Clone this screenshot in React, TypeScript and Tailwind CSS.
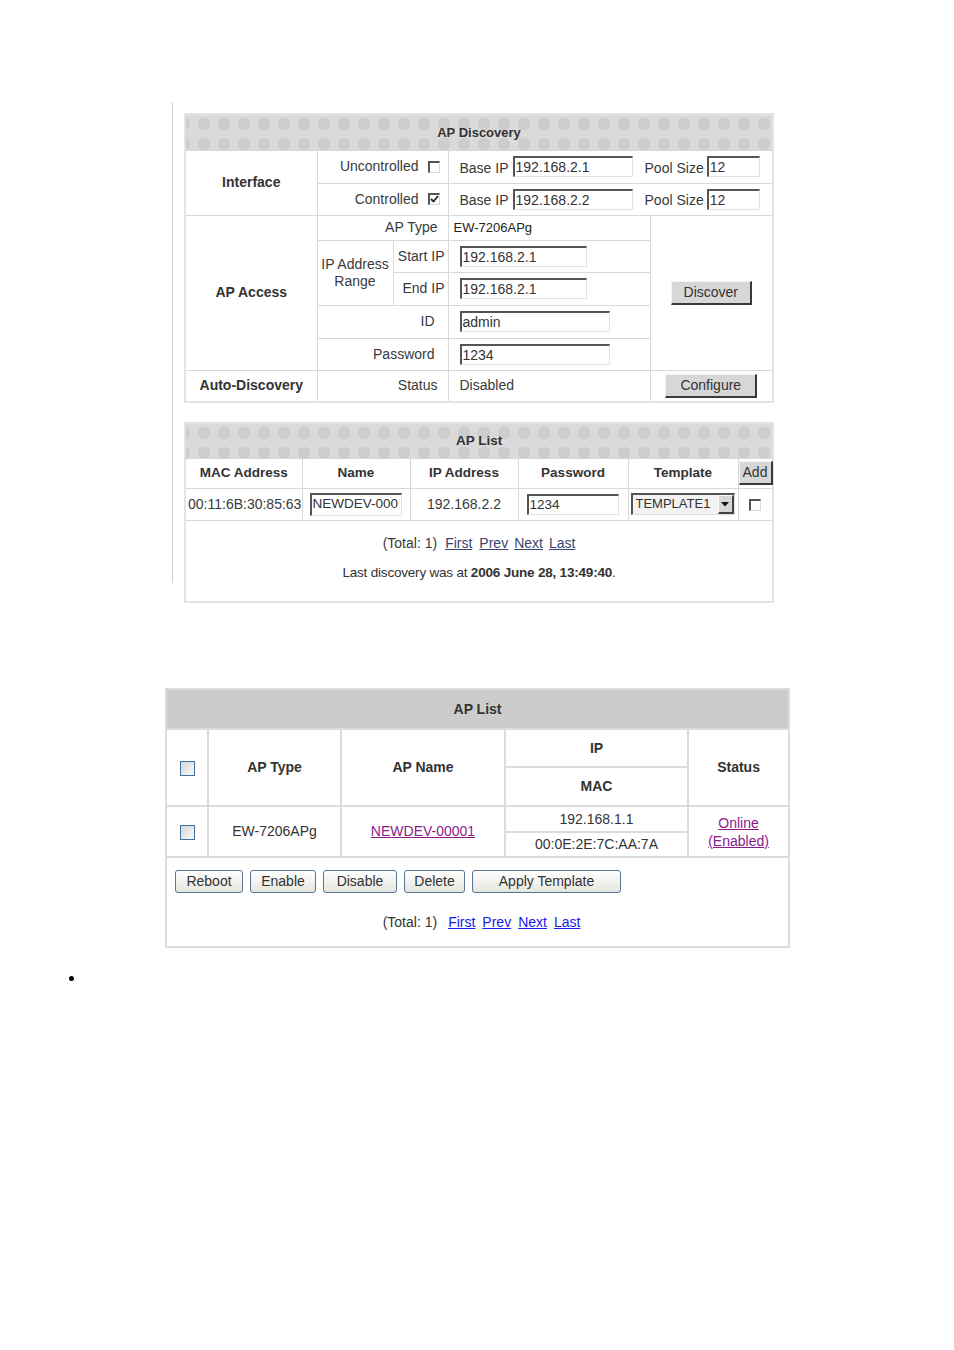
import React from "react";

const hdr =
  "bg-[#dadada] bg-[radial-gradient(circle,#cdcdcd_6px,transparent_6.5px)] bg-[length:20px_20px] bg-[position:8px_-1px]";
const tc = "p-0 border border-[#d9d9d9]";

function TInput({ w, value, fs }: { w: string; value: string; fs?: string }) {
  return (
    <div
      className={`h-[21px] ${w} ${fs ?? "text-[14px]"} border-t-2 border-l-2 border-r border-b border-t-[#555] border-l-[#555] border-r-[#e2e2e2] border-b-[#e2e2e2] bg-white pl-[1px] leading-[18px] text-[#333] overflow-hidden whitespace-nowrap`}
    >
      {value}
    </div>
  );
}

function TButton({ w, label }: { w: string; label: string }) {
  return (
    <div
      className={`inline-flex items-center justify-center h-[24px] ${w} bg-[#d7d7d7] border-t border-l border-t-[#f4f4f4] border-l-[#f4f4f4] border-r-2 border-b-2 border-r-[#3a3a3a] border-b-[#3a3a3a] text-[14px] text-[#333]`}
    >
      {label}
    </div>
  );
}

function TCheck({ checked }: { checked?: boolean }) {
  return (
    <span className="inline-flex w-[12px] h-[12px] border-t-2 border-l-2 border-r border-b border-t-[#555] border-l-[#555] border-r-[#d8d8d8] border-b-[#d8d8d8] bg-white align-middle items-center justify-center">
      {checked && (
        <svg width="9" height="9" viewBox="0 0 9 9">
          <path d="M1 4 L3.5 6.5 L8 1" stroke="#222" strokeWidth="1.8" fill="none" />
        </svg>
      )}
    </span>
  );
}

function BButton({ w, label }: { w: string; label: string }) {
  return (
    <div
      className={`flex items-center justify-center h-[23px] ${w} rounded-[3px] border border-[#5a7494] bg-gradient-to-b from-white to-[#e6e5de] text-[14px] text-[#333]`}
    >
      {label}
    </div>
  );
}

function BCheck() {
  return (
    <span className="inline-block w-[15px] h-[15px] border border-[#43709f] bg-gradient-to-br from-[#d6d6d6] to-[#fafafa] align-middle" />
  );
}

function IfaceRow({ label, checked, ip }: { label: string; checked?: boolean; ip: string }) {
  return (
    <>
      <td colSpan={2} className={`${tc} text-right pr-[8px]`}>
        <span className="inline-flex items-center gap-[9px]">
          {label} <TCheck checked={checked} />
        </span>
      </td>
      <td colSpan={2} className={`${tc} pl-[11px]`}>
        <div className="flex items-center">
          <span className="mt-[3px]">Base IP</span>
          <span className="ml-[4px]">
            <TInput w="w-[120px]" value={ip} />
          </span>
          <span className="ml-[12px] mt-[3px]">Pool Size</span>
          <span className="ml-[3px]">
            <TInput w="w-[53px]" value="12" />
          </span>
        </div>
      </td>
    </>
  );
}

function APDiscovery() {
  return (
    <table className="table-fixed border-collapse w-[588px] border-2 border-[#e3e3e3] text-[14px] text-[#3a3a3a]">
      <colgroup>
        <col className="w-[132px]" />
        <col className="w-[76px]" />
        <col className="w-[55px]" />
        <col className="w-[202px]" />
        <col className="w-[123px]" />
      </colgroup>
      <tbody>
        <tr className="h-[36px]">
          <td colSpan={5} className={`${tc} ${hdr} text-center font-bold text-[13px] text-[#333]`}>
            AP Discovery
          </td>
        </tr>
        <tr className="h-[33px]">
          <td rowSpan={2} className={`${tc} text-center font-bold text-[#333]`}>
            Interface
          </td>
          <IfaceRow label="Uncontrolled" ip="192.168.2.1" />
        </tr>
        <tr className="h-[32px]">
          <IfaceRow label="Controlled" checked ip="192.168.2.2" />
        </tr>
        <tr className="h-[25px]">
          <td rowSpan={5} className={`${tc} text-center font-bold text-[#333]`}>
            AP Access
          </td>
          <td colSpan={2} className={`${tc} text-right pr-[10px]`}>
            AP Type
          </td>
          <td className={`${tc} pl-[5px] text-[13px] text-[#222]`}>EW-7206APg</td>
          <td rowSpan={5} className={`${tc} text-center`}>
            <TButton w="w-[81px]" label="Discover" />
          </td>
        </tr>
        <tr className="h-[32px]">
          <td rowSpan={2} className={`${tc} text-center leading-[17px]`}>
            IP Address
            <br />
            Range
          </td>
          <td className={`${tc} text-right pr-[3px]`}>Start IP</td>
          <td className={`${tc} pl-[11px]`}>
            <TInput w="w-[127px]" value="192.168.2.1" />
          </td>
        </tr>
        <tr className="h-[33px]">
          <td className={`${tc} text-right pr-[3px]`}>End IP</td>
          <td className={`${tc} pl-[11px]`}>
            <TInput w="w-[127px]" value="192.168.2.1" />
          </td>
        </tr>
        <tr className="h-[33px]">
          <td colSpan={2} className={`${tc} text-right pr-[13px]`}>
            ID
          </td>
          <td className={`${tc} pl-[11px]`}>
            <TInput w="w-[150px]" value="admin" />
          </td>
        </tr>
        <tr className="h-[32px]">
          <td colSpan={2} className={`${tc} text-right pr-[13px]`}>
            Password
          </td>
          <td className={`${tc} pl-[11px]`}>
            <TInput w="w-[150px]" value="1234" />
          </td>
        </tr>
        <tr className="h-[32px]">
          <td className={`${tc} text-center font-bold text-[#333]`}>Auto-Discovery</td>
          <td colSpan={2} className={`${tc} text-right pr-[10px]`}>
            Status
          </td>
          <td className={`${tc} pl-[11px]`}>Disabled</td>
          <td className={`${tc} text-center`}>
            <TButton w="w-[92px]" label="Configure" />
          </td>
        </tr>
      </tbody>
    </table>
  );
}

function TopAPList() {
  const h = `${tc} text-center font-bold text-[13.5px] text-[#333]`;
  return (
    <table className="table-fixed border-collapse w-[588px] border-2 border-[#e3e3e3] text-[14px] text-[#3a3a3a]">
      <colgroup>
        <col className="w-[117px]" />
        <col className="w-[108px]" />
        <col className="w-[108px]" />
        <col className="w-[110px]" />
        <col className="w-[110px]" />
        <col className="w-[35px]" />
      </colgroup>
      <tbody>
        <tr className="h-[35px]">
          <td colSpan={6} className={`${tc} ${hdr} text-center font-bold text-[13.5px] text-[#333]`}>
            AP List
          </td>
        </tr>
        <tr className="h-[30px]">
          <td className={h}>MAC Address</td>
          <td className={h}>Name</td>
          <td className={h}>IP Address</td>
          <td className={h}>Password</td>
          <td className={h}>Template</td>
          <td className={`${tc} text-center`}>
            <div className="inline-flex items-center justify-center h-[24px] w-[34px] bg-[#d7d7d7] border-t border-l border-t-[#f4f4f4] border-l-[#f4f4f4] border-r-2 border-b-2 border-r-[#3a3a3a] border-b-[#3a3a3a] text-[14px] text-[#333]">
              Add
            </div>
          </td>
        </tr>
        <tr className="h-[32px]">
          <td className={`${tc} pl-[2px] whitespace-nowrap overflow-hidden`}>00:11:6B:30:85:63</td>
          <td className={`${tc} pl-[7px]`}>
            <TInput w="w-[92px] h-[23px]" value="NEWDEV-000" fs="text-[13.5px]" />
          </td>
          <td className={`${tc} text-center`}>192.168.2.2</td>
          <td className={`${tc} pl-[8px]`}>
            <TInput w="w-[92px]" value="1234" fs="text-[13.5px]" />
          </td>
          <td className={`${tc} pl-[2px]`}>
            <div className="flex h-[22px] w-[104px] border-t-2 border-l-2 border-r border-b border-t-[#555] border-l-[#555] border-r-[#dedede] border-b-[#dedede] bg-[#f2f2f2]">
              <span className="flex-1 pl-[3px] text-[13px] leading-[18px] text-[#333]">TEMPLATE1</span>
              <span className="flex w-[16px] items-center justify-center bg-[#d6d6d6] border-t border-l border-t-[#fafafa] border-l-[#fafafa] border-r-2 border-b-2 border-r-[#444] border-b-[#444]">
                <svg width="8" height="5" viewBox="0 0 8 5">
                  <path d="M0 0 L8 0 L4 4.5 Z" fill="#111" />
                </svg>
              </span>
            </div>
          </td>
          <td className={`${tc} text-center`}>
            <TCheck />
          </td>
        </tr>
        <tr className="h-[82px]">
          <td colSpan={6} className={`${tc} align-top text-center`}>
            <div className="mt-[13px] h-[18px] leading-[18px] flex justify-center text-[14px]">
              <span>(Total: 1)</span>
              <span className="ml-[8px] underline text-[#3a4472]">First</span>
              <span className="ml-[7px] underline text-[#3a4472]">Prev</span>
              <span className="ml-[6px] underline text-[#3a4472]">Next</span>
              <span className="ml-[6px] underline text-[#3a4472]">Last</span>
            </div>
            <div className="mt-[12px] h-[18px] leading-[18px] text-[13.5px] tracking-[-0.2px] text-[#333]">
              Last discovery was at <span className="font-bold">2006 June 28, 13:49:40</span>.
            </div>
          </td>
        </tr>
      </tbody>
    </table>
  );
}

function BottomAPList() {
  const c = "p-0 border-2 border-[#dcdcdc]";
  const h = `${c} text-center font-bold text-[14px] text-[#333]`;
  return (
    <table className="table-fixed border-collapse w-[623px] border-2 border-[#d6d6d6] text-[14px] text-[#333]">
      <colgroup>
        <col className="w-[42px]" />
        <col className="w-[133px]" />
        <col className="w-[164px]" />
        <col className="w-[183px]" />
        <col className="w-[101px]" />
      </colgroup>
      <tbody>
        <tr className="h-[40px]">
          <td colSpan={5} className={`${c} bg-[#cccccc] text-center font-bold`}>
            AP List
          </td>
        </tr>
        <tr className="h-[38px]">
          <td rowSpan={2} className={`${c} text-center`}>
            <BCheck />
          </td>
          <td rowSpan={2} className={h}>AP Type</td>
          <td rowSpan={2} className={h}>AP Name</td>
          <td className={h}>IP</td>
          <td rowSpan={2} className={h}>Status</td>
        </tr>
        <tr className="h-[39px]">
          <td className={h}>MAC</td>
        </tr>
        <tr className="h-[26px]">
          <td rowSpan={2} className={`${c} text-center`}>
            <BCheck />
          </td>
          <td rowSpan={2} className={`${c} text-center`}>EW-7206APg</td>
          <td rowSpan={2} className={`${c} text-center`}>
            <span className="underline text-[#8b1a8b]">NEWDEV-00001</span>
          </td>
          <td className={`${c} text-center`}>192.168.1.1</td>
          <td rowSpan={2} className={`${c} text-center leading-[18px]`}>
            <span className="underline text-[#8b1a8b]">Online</span>
            <br />
            <span className="underline text-[#8b1a8b]">(Enabled)</span>
          </td>
        </tr>
        <tr className="h-[25px]">
          <td className={`${c} text-center`}>00:0E:2E:7C:AA:7A</td>
        </tr>
        <tr className="h-[90px]">
          <td colSpan={5} className={`${c} align-top`}>
            <div className="mt-[12px] ml-[8px] flex gap-[7px]">
              <BButton w="w-[68px]" label="Reboot" />
              <BButton w="w-[66px]" label="Enable" />
              <BButton w="w-[74px]" label="Disable" />
              <BButton w="w-[61px]" label="Delete" />
              <BButton w="w-[149px]" label="Apply Template" />
            </div>
            <div className="mt-[20px] h-[18px] leading-[18px] flex justify-center pl-[8px]">
              <span>(Total: 1)</span>
              <span className="ml-[11px] underline text-[#1a1aee]">First</span>
              <span className="ml-[7px] underline text-[#1a1aee]">Prev</span>
              <span className="ml-[7px] underline text-[#1a1aee]">Next</span>
              <span className="ml-[7px] underline text-[#1a1aee]">Last</span>
            </div>
          </td>
        </tr>
      </tbody>
    </table>
  );
}

export default function App() {
  return (
    <div className="w-[954px] h-[1350px] bg-white font-['Liberation_Sans',Arial,sans-serif] overflow-hidden">
      <div className="flex ml-[172px] pt-[102px]">
        <div className="w-px h-[481px] bg-[#d2d2d2] shrink-0" />
        <div className="ml-[11px] mt-[11px] flex flex-col gap-[19px]">
          <APDiscovery />
          <TopAPList />
        </div>
      </div>
      <div className="ml-[165px] mt-[85px]">
        <BottomAPList />
      </div>
      <div className="ml-[69px] mt-[28px] w-[5px] h-[5px] rounded-full bg-black" />
    </div>
  );
}
